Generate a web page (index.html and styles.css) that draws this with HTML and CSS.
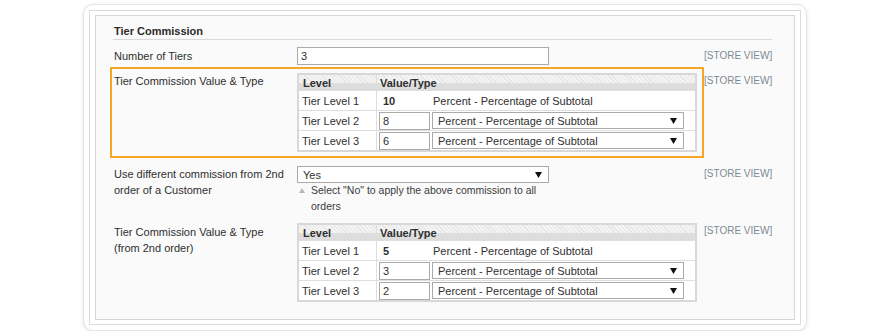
FILE: index.html
```html
<!DOCTYPE html>
<html>
<head>
<meta charset="utf-8">
<link rel="stylesheet" href="styles.css">
</head>
<body>
<div class="card">
  <div class="frame">
    <div class="panel">
      <h4 class="legend">Tier Commission</h4>

      <div class="row r1">
        <div class="field">
          <div class="label label-input">Number of Tiers</div>
          <div class="value"><input class="txt" type="text" value="3"></div>
        </div>
        <div class="scope scope-input">[STORE VIEW]</div>
      </div>

      <div class="row r2">
        <div class="field hl">
          <div class="label">Tier Commission Value &amp; Type</div>
          <div class="value">
            <table class="tiers">
              <thead>
                <tr><th class="c1">Level</th><th class="c2">Value/Type</th></tr>
              </thead>
              <tbody>
                <tr>
                  <td class="c1">Tier Level 1</td>
                  <td class="c2"><div class="cell"><span class="num">10</span><span class="fixed">Percent - Percentage of Subtotal</span></div></td>
                </tr>
                <tr>
                  <td class="c1">Tier Level 2</td>
                  <td class="c2"><div class="cell"><input class="small" type="text" value="8"><div class="sel sel-type"><span>Percent - Percentage of Subtotal</span><svg class="arr" width="7" height="6" viewBox="0 0 7 6"><polygon points="0,0 7,0 3.5,6" fill="#111"/></svg></div></div></td>
                </tr>
                <tr>
                  <td class="c1">Tier Level 3</td>
                  <td class="c2"><div class="cell"><input class="small" type="text" value="6"><div class="sel sel-type"><span>Percent - Percentage of Subtotal</span><svg class="arr" width="7" height="6" viewBox="0 0 7 6"><polygon points="0,0 7,0 3.5,6" fill="#111"/></svg></div></div></td>
                </tr>
              </tbody>
            </table>
          </div>
        </div>
        <div class="scope scope-hl">[STORE VIEW]</div>
      </div>

      <div class="row r3">
        <div class="field">
          <div class="label">Use different commission from 2nd order of a Customer</div>
          <div class="value">
            <div class="sel sel-wide"><span>Yes</span><svg class="arr" width="7" height="6" viewBox="0 0 7 6"><polygon points="0,0 7,0 3.5,6" fill="#111"/></svg></div>
            <div class="note">
              <svg class="note-arr" width="6" height="5" viewBox="0 0 6 5"><polygon points="0,5 6,5 3,0" fill="#b3b9bd"/></svg>
              <p>Select "No" to apply the above commission to all orders</p>
            </div>
          </div>
        </div>
        <div class="scope">[STORE VIEW]</div>
      </div>

      <div class="row r4">
        <div class="field">
          <div class="label label-top">Tier Commission Value &amp; Type<br>(from 2nd order)</div>
          <div class="value">
            <table class="tiers">
              <thead>
                <tr><th class="c1">Level</th><th class="c2">Value/Type</th></tr>
              </thead>
              <tbody>
                <tr>
                  <td class="c1">Tier Level 1</td>
                  <td class="c2"><div class="cell"><span class="num">5</span><span class="fixed">Percent - Percentage of Subtotal</span></div></td>
                </tr>
                <tr>
                  <td class="c1">Tier Level 2</td>
                  <td class="c2"><div class="cell"><input class="small" type="text" value="3"><div class="sel sel-type"><span>Percent - Percentage of Subtotal</span><svg class="arr" width="7" height="6" viewBox="0 0 7 6"><polygon points="0,0 7,0 3.5,6" fill="#111"/></svg></div></div></td>
                </tr>
                <tr>
                  <td class="c1">Tier Level 3</td>
                  <td class="c2"><div class="cell"><input class="small" type="text" value="2"><div class="sel sel-type"><span>Percent - Percentage of Subtotal</span><svg class="arr" width="7" height="6" viewBox="0 0 7 6"><polygon points="0,0 7,0 3.5,6" fill="#111"/></svg></div></div></td>
                </tr>
              </tbody>
            </table>
          </div>
        </div>
        <div class="scope">[STORE VIEW]</div>
      </div>
    </div>
  </div>
</div>
</body>
</html>
```
FILE: styles.css
```css
body {
  margin: 0;
  background: #fff;
  font-family: "Liberation Sans", Arial, sans-serif;
  font-size: 11px;
  color: #2f2f2f;
}

.card {
  margin: 4px 0 0 83px;
  width: 724px;
  height: 327px;
  box-sizing: border-box;
  border: 1px solid #e4e4e4;
  border-radius: 10px;
  box-shadow: 0 1px 4px rgba(0, 0, 0, 0.10);
  background: #fff;
  padding: 5px;
  display: flex;
}

.frame {
  flex: 1;
  display: flex;
  border: 1px solid #dcdcdc;
  padding: 4px 5px;
  background: #fff;
}

.panel {
  flex: 1;
  border: 1px solid #d6d6d6;
  background: #fafafa;
  padding: 0 22px 0 18px;
}

.legend {
  margin: 8px 0 0 -1px;
  padding-left: 1px;
  font-size: 11px;
  font-weight: bold;
  line-height: 15px;
  border-bottom: 1px solid #d9d9d9;
  color: #2b2b2b;
}

.row {
  display: flex;
  align-items: flex-start;
}

.r1 { margin-top: 7px; }
.r2 { margin-top: 2px; }
.r3 { margin-top: 8px; }
.r4 { margin-top: 9px; }

.field {
  display: flex;
  width: 590px;
  box-sizing: border-box;
  flex: none;
}

.hl {
  margin-left: -4px;
  width: 594px;
  border: 2px solid #f5a623;
  padding: 4px 0 4px 2px;
}

.label {
  width: 183px;
  flex: none;
  line-height: 16px;
  box-sizing: border-box;
  padding-right: 6px;
}

.label-input { line-height: 18px; }
.label-top { padding-top: 1px; }

.value {
  width: 400px;
  flex: none;
}

.scope {
  font-size: 10px;
  line-height: 16px;
  color: #7d8a94;
  white-space: nowrap;
}

.scope-input { padding-top: 1px; }
.scope-hl { padding-top: 6px; }

.txt {
  display: block;
  width: 252px;
  height: 18px;
  box-sizing: border-box;
  margin: 0;
  border: 1px solid #aaa;
  background: #fff;
  padding: 0 3px;
  font-family: "Liberation Sans", Arial, sans-serif;
  font-size: 11px;
  color: #2f2f2f;
  outline: none;
}

.sel {
  display: flex;
  align-items: center;
  justify-content: space-between;
  box-sizing: border-box;
  height: 17px;
  border: 1px solid #aaa;
  background: #fff;
  padding: 0 6px 0 5px;
  color: #2f2f2f;
}

.sel-wide {
  width: 252px;
}

.sel-type {
  width: 252px;
  margin-left: 2px;
}

.arr { display: block; flex: none; }

.note {
  display: flex;
  align-items: flex-start;
  width: 252px;
  margin-top: -1px;
}

.note-arr {
  flex: none;
  margin: 6px 6px 0 2px;
  display: block;
}

.note p {
  margin: 0;
  font-size: 10.5px;
  line-height: 16px;
  color: #3a3a3a;
}

.tiers {
  width: 400px;
  border: 2px solid #d8d8d8;
  border-spacing: 0;
  background: #fff;
  table-layout: fixed;
}

.tiers th,
.tiers td {
  padding: 0;
  text-align: left;
  font-size: 11px;
  vertical-align: middle;
}

.tiers th {
  height: 15px;
  font-weight: bold;
  background:
    linear-gradient(to bottom, rgba(0,0,0,0) 0, rgba(0,0,0,0) 8px, #dedede 8px, #dcdcdc 15px),
    repeating-linear-gradient(45deg, #f4f4f4 0, #f4f4f4 2px, #e6e6e6 2px, #e6e6e6 3px);
}

.tiers th.c1 { width: 77px; padding-left: 4px; box-sizing: border-box; }
.tiers th.c2 { padding-left: 3px; border-left: 1px solid #dedede; }

.tiers td {
  height: 19px;
  border-top: 1px solid #dedede;
}

.tiers td.c1 { padding-left: 3px; }
.tiers td.c2 { border-left: 1px solid #dedede; padding-left: 2px; }

.cell {
  display: flex;
  align-items: center;
}

.num {
  display: inline-block;
  width: 51px;
  box-sizing: border-box;
  padding-left: 4px;
  font-weight: bold;
}

.fixed { margin-left: 3px; }

.small {
  display: block;
  width: 51px;
  height: 18px;
  box-sizing: border-box;
  margin: 0;
  border: 1px solid #aaa;
  background: #fff;
  padding: 0 3px;
  font-family: "Liberation Sans", Arial, sans-serif;
  font-size: 11px;
  color: #2f2f2f;
  outline: none;
}
```
